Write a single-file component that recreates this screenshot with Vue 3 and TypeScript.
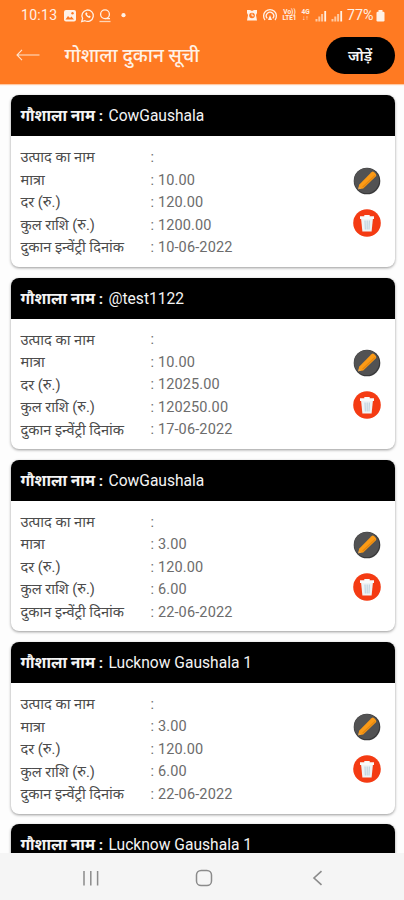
<script setup lang="ts">
interface Entry {
  name: string
  details?: { qty: string; rate: string; total: string; date: string }
}

const entries: Entry[] = [
  { name: 'CowGaushala', details: { qty: '10.00', rate: '120.00', total: '1200.00', date: '10-06-2022' } },
  { name: '@test1122', details: { qty: '10.00', rate: '12025.00', total: '120250.00', date: '17-06-2022' } },
  { name: 'CowGaushala', details: { qty: '3.00', rate: '120.00', total: '6.00', date: '22-06-2022' } },
  { name: 'Lucknow Gaushala 1', details: { qty: '3.00', rate: '120.00', total: '6.00', date: '22-06-2022' } },
  { name: 'Lucknow Gaushala 1' },
]

const rowsOf = (d: NonNullable<Entry['details']>) => [
  { label: 'उत्पाद का नाम', value: '' },
  { label: 'मात्रा', value: d.qty },
  { label: 'दर (रु.)', value: d.rate },
  { label: 'कुल राशि (रु.)', value: d.total },
  { label: 'दुकान इन्वेंट्री दिनांक', value: d.date },
]
</script>

<template>
  <div class="screen">
    <header class="top">
      <div class="status">
        <span class="clock">10:13</span>
        <svg class="left-icons" width="64" height="16" viewBox="0 0 64 16">
          <rect x="1" y="2" width="12" height="11.5" rx="2" fill="#fff1e6" />
          <path d="M2.5 11.5l2.5-3.5 2 2 1.5-1.5 2.5 3z" fill="#ff7a22" />
          <circle cx="9.5" cy="5.3" r="1.2" fill="#ff7a22" />
          <g fill="none" stroke="#fff1e6" stroke-width="1.3">
            <path d="M18.7 13.6l.9-3.2a5.7 5.7 0 1 1 2.3 2.3z" />
            <circle cx="42" cy="6.3" r="4.4" />
            <path d="M42 10.6h5" />
            <path d="M36.5 13.5h11" stroke="#ffd5b5" />
          </g>
          <path d="M22.5 5c-1 1.7 2.4 5.5 4.6 4.8l.6-1.4-1.5-.9-.8.8-1.5-1.7.6-.8-.7-1.5z" fill="#fff1e6" />
          <circle cx="60.5" cy="7.2" r="2.1" fill="#fff1e6" />
        </svg>
        <div class="spacer"></div>
        <svg class="alarm" width="12" height="14" viewBox="0 0 12 14">
          <path d="M1 2h3l2 1 2-1h3v3l-1 2 1 5.5H1L2 7 1 5z" fill="#fff1e6" />
          <circle cx="6" cy="7.5" r="2.8" fill="#ff7a22" />
          <path d="M6 5.5v2.3h1.8" fill="none" stroke="#fff1e6" stroke-width="1" />
        </svg>
        <svg class="hotspot" width="16" height="14" viewBox="0 0 16 14">
          <g fill="none" stroke="#fff1e6" stroke-width="1.3">
            <path d="M3 12A6.4 6.4 0 1 1 13 12" />
            <path d="M5.2 10.4a3.7 3.7 0 1 1 5.6 0" />
          </g>
          <path d="M6 12l2-5 2 5z" fill="#fff1e6" />
        </svg>
        <span class="tiny volte">Vo))<br />LTE1</span>
        <span class="tiny net">4G<br />↓↑</span>
        <svg v-for="n in 2" :key="n" class="signal" width="12" height="13" viewBox="0 0 12 13">
          <path d="M1.5 12.5V10M4.3 12.5V7.5M7.1 12.5V5" stroke="#ffc8a0" stroke-width="2" />
          <path d="M10.2 12.5V2" stroke="#fff1e6" stroke-width="1.8" />
        </svg>
        <span class="percent">77%</span>
        <svg class="battery" width="9" height="13" viewBox="0 0 9 13">
          <rect x=".5" y="2.8" width="8" height="9.7" rx="1.2" fill="#fff1e6" />
          <rect x="2.5" y="1" width="4" height="2.5" fill="#fff1e6" />
        </svg>
      </div>
      <div class="bar">
        <svg class="back" width="24" height="12" viewBox="0 0 24 12">
          <path d="M6 .8L1 6l5 5.2M1 6h22.5" fill="none" stroke="#ffe3cf" stroke-width="1.1" />
        </svg>
        <h1>गोशाला दुकान सूची</h1>
        <button class="add">जोड़ें</button>
      </div>
    </header>

    <main class="list">
      <article v-for="(e, i) in entries" :key="i" class="card">
        <h2><b>गौशाला नाम :</b><span>{{ e.name }}</span></h2>
        <div v-if="e.details" class="body">
          <dl>
            <div v-for="r in rowsOf(e.details)" :key="r.label" class="row">
              <dt>{{ r.label }}</dt>
              <dd>: {{ r.value }}</dd>
            </div>
          </dl>
          <div class="actions">
            <svg width="28" height="28" viewBox="0 0 28 28">
              <circle cx="14" cy="14" r="13.3" fill="#39393a" />
              <circle cx="13.6" cy="13.6" r="12.5" fill="#525253" />
              <path d="M5.3 22.3l.8-4.6L18.4 5.2q1.4-1.2 2.8 0l1.5 1.5q1.3 1.4 0 2.8L10.2 21.4z" fill="#fb9a16" />
              <path d="M9.6 20.3L22 8.4" stroke="#e3850f" stroke-width="1.2" />
              <path d="M5.3 22.3l.5-2.6 2.2 2.1z" fill="#d9a868" />
            </svg>
            <svg width="28" height="28" viewBox="0 0 28 28">
              <circle cx="14" cy="14" r="13.8" fill="#f43b13" />
              <path d="M8 9h12l-1.4 13.5H9.4z" fill="#eef3f5" />
              <path d="M12 11.5l.4 9M14.2 11.5v9M16.4 11.5l-.4 9" stroke="#c3d6e0" stroke-width="1.3" />
              <path d="M7 7.3h4.3V6h5.4v1.3H21v2.6H7z" fill="#f8fafa" />
            </svg>
          </div>
        </div>
      </article>
    </main>

    <nav class="nav">
      <svg width="18" height="18" viewBox="0 0 18 18">
        <path d="M2 2v14.5M8.8 2v14.5M15.6 2v14.5" stroke="#8b8b8b" stroke-width="1.5" />
      </svg>
      <svg width="18" height="18" viewBox="0 0 18 18">
        <rect x="1.5" y="1.5" width="15" height="15" rx="4.6" fill="none" stroke="#8b8b8b" stroke-width="1.5" />
      </svg>
      <svg width="18" height="18" viewBox="0 0 18 18">
        <path d="M12.5 2.2L5 9l7.5 6.8" fill="none" stroke="#8b8b8b" stroke-width="1.6" />
      </svg>
    </nav>
  </div>
</template>

<style>
body {
  margin: 0;
}
</style>

<style scoped>
.screen {
  width: 404px;
  height: 900px;
  display: flex;
  flex-direction: column;
  overflow: hidden;
  background: #fdfdfd;
  font-family: Roboto, "Noto Sans", "Noto Sans Devanagari", sans-serif;
}
.top {
  height: 84px;
  flex: none;
  background: #ff7a22;
  box-shadow: 0 1px 1px #ffc9a3;
}
.status {
  height: 30px;
  box-sizing: border-box;
  padding: 0 19px 0 21px;
  display: flex;
  align-items: center;
  color: #fff1e6;
}
.clock {
  width: 42px;
  font-size: 14px;
  letter-spacing: 0.3px;
}
.left-icons {
  margin-top: 1px;
}
.spacer {
  flex: 1;
}
.alarm {
  margin-right: 4px;
}
.hotspot {
  margin-right: 4px;
}
.tiny {
  font-size: 6.5px;
  line-height: 6.5px;
  font-weight: 700;
  text-align: center;
  white-space: nowrap;
}
.volte {
  width: 15px;
  margin-right: 4px;
}
.net {
  width: 9px;
  margin-right: 5px;
}
.signal {
  margin-right: 4px;
}
.percent {
  width: 28px;
  font-size: 14.3px;
  white-space: nowrap;
}
.battery {
  margin-left: 1px;
}
.bar {
  height: 50px;
  display: flex;
  align-items: center;
  padding: 0 9px 0 16px;
}
.back {
  flex: none;
}
h1 {
  margin: 2px 0 0 24.5px;
  flex: 1;
  color: #fff1e6;
  font-size: 19.1px;
  line-height: 30px;
  font-weight: 500;
  white-space: nowrap;
}
.add {
  width: 69px;
  height: 37px;
  border: 0;
  padding: 0 1px 0 0;
  border-radius: 19px;
  background: #000;
  color: #f6f6f6;
  font: 600 15px/38px Roboto, "Noto Sans", "Noto Sans Devanagari", sans-serif;
}
.list {
  flex: 1;
  min-height: 0;
  overflow: hidden;
  padding: 11.3px 9.5px 0 10.5px;
  display: flex;
  flex-direction: column;
  gap: 10.8px;
}
.card {
  flex: none;
  height: 171.5px;
  border-radius: 8px;
  overflow: hidden;
  background: #fff;
  box-shadow: 0 1px 3px rgba(0, 0, 0, 0.4);
}
h2 {
  margin: 0;
  height: 41px;
  padding: 1px 10px 0;
  box-sizing: border-box;
  display: flex;
  align-items: center;
  gap: 5px;
  background: #000;
  color: #f4f4f4;
  font-size: 15.6px;
  font-weight: 400;
  line-height: 24px;
  white-space: nowrap;
}
h2 b {
  width: 83px;
  font-size: 15.5px;
}
.body {
  display: flex;
  justify-content: space-between;
  padding: 10px 13.7px 0 10px;
}
dl {
  margin: 0;
}
.row {
  display: flex;
  height: 22.5px;
  line-height: 22.5px;
  white-space: nowrap;
}
dt {
  width: 130px;
  font-size: 14.6px;
  color: #4c4c4c;
}
dd {
  margin: 0;
  padding-top: 0.8px;
  font-size: 14.5px;
  letter-spacing: 0.14px;
  color: #6c6c6c;
}
.actions {
  display: flex;
  flex-direction: column;
  gap: 14px;
  padding-top: 20.3px;
}
.actions svg {
  display: block;
}
.nav {
  flex: none;
  height: 47px;
  background: #f5f5f5;
  display: flex;
  align-items: center;
  justify-content: center;
  gap: 95.5px;
  padding: 2px 0 0 4px;
  box-sizing: border-box;
}
</style>
